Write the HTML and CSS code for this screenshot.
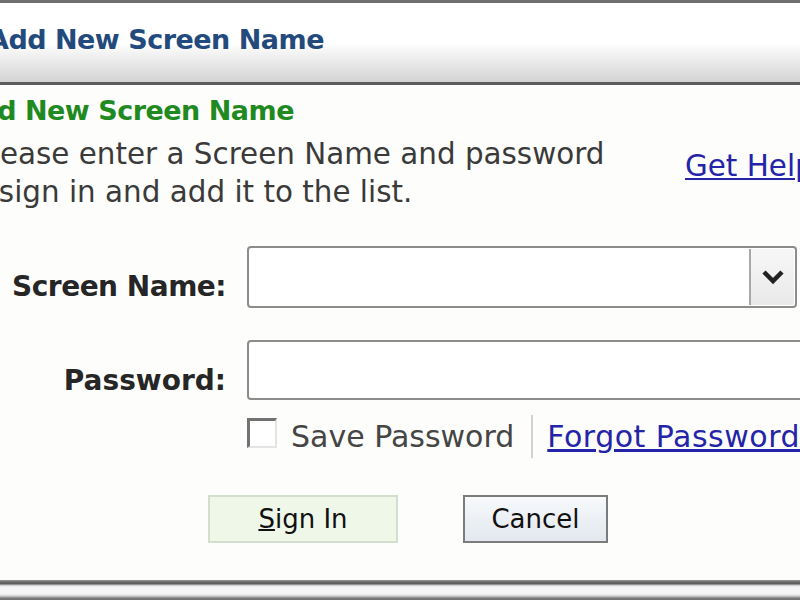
FILE: index.html
```html
<!DOCTYPE html>
<html>
<head>
<meta charset="utf-8">
<title>Add New Screen Name</title>
<link rel="stylesheet" href="styles.css">
</head>
<body>
<div class="window">
  <header class="titlebar"><h1 class="title">Add New Screen Name</h1></header>
  <main class="content">
    <h2 class="heading">Add New Screen Name</h2>
    <div class="intro">
      <p class="intro-text">Please enter a Screen Name and password<br>to sign in and add it to the list.</p>
      <a class="link help" href="#">Get Help</a>
    </div>
    <div class="row row-name">
      <label class="label">Screen Name:</label>
      <div class="combo">
        <div class="combo-input"></div>
        <div class="combo-btn">
          <svg width="24" height="16" viewBox="0 0 24 16"><path d="M3 3 L12 12 L21 3" fill="none" stroke="#222" stroke-width="4.5"/></svg>
        </div>
      </div>
    </div>
    <div class="row row-pass">
      <label class="label label-pass">Password:</label>
      <div class="field"></div>
    </div>
    <div class="options">
      <span class="checkbox"></span>
      <span class="opt-text">Save Password</span>
      <span class="sep"></span>
      <a class="link forgot" href="#">Forgot Password</a>
    </div>
    <div class="buttons">
      <button class="btn btn-signin"><u>S</u>ign In</button>
      <button class="btn btn-cancel">Cancel</button>
    </div>
  </main>
  <footer class="footer"></footer>
</div>
</body>
</html>
```
FILE: styles.css
```css
html, body {
  margin: 0;
  padding: 0;
}
body {
  width: 800px;
  height: 600px;
  overflow: hidden;
  background: #fdfdfb;
  font-family: "DejaVu Sans", sans-serif;
}
.window {
  width: 800px;
  height: 600px;
  display: flex;
  flex-direction: column;
  overflow: hidden;
}
.titlebar {
  flex: none;
  height: 79px;
  border-top: 3px solid #6f6f6f;
  border-bottom: 3px solid #5c5c5c;
  background: linear-gradient(to bottom, #ffffff 0px, #ffffff 40px, #f3f3f3 50px, #e2e2e2 66px, #d3d3d3 79px);
  display: flex;
  align-items: flex-start;
  white-space: nowrap;
}
.title {
  margin: 22px 0 0 -12px;
  font-size: 27px;
  line-height: 30px;
  font-weight: bold;
  letter-spacing: -0.5px;
  color: #234a7c;
}
.content {
  flex: none;
  height: 495px;
  overflow: hidden;
}
.heading {
  margin: 11px 0 0 -42px;
  font-size: 27px;
  line-height: 30px;
  font-weight: bold;
  letter-spacing: -0.5px;
  color: #1f8a1f;
  white-space: nowrap;
}
.intro {
  display: flex;
  margin-top: 9px;
  height: 76px;
}
.intro-text {
  flex: none;
  width: 725px;
  margin: 0 0 0 -40px;
  text-indent: 14px;
  font-size: 29.4px;
  line-height: 38px;
  color: #3a3a3a;
  white-space: nowrap;
}
.link {
  color: #2424a8;
  text-decoration: underline;
  white-space: nowrap;
}
.help {
  flex: none;
  padding-top: 12px;
  font-size: 29.4px;
  line-height: 38px;
}
.row {
  display: flex;
  column-gap: 21px;
}
.row-name {
  margin-top: 35px;
}
.row-pass {
  margin-top: 32px;
}
.label {
  flex: none;
  width: 226px;
  margin-top: 26px;
  text-align: right;
  font-size: 28px;
  line-height: 30px;
  font-weight: bold;
  letter-spacing: -0.5px;
  color: #262626;
  white-space: nowrap;
}
.label-pass {
  letter-spacing: 0;
}
.combo {
  flex: none;
  width: 550px;
  height: 62px;
  box-sizing: border-box;
  border: 2px solid #8c8c8c;
  border-radius: 4px;
  background: #ffffff;
  display: flex;
}
.combo-input {
  flex: 1;
}
.combo-btn {
  flex: none;
  width: 43px;
  margin: 1px 1px 1px 0;
  border-left: 2px solid #a9a9a9;
  border-radius: 0 2px 2px 0;
  background: linear-gradient(to bottom, #f7f7f7, #e9e9e9);
  display: flex;
  align-items: center;
  justify-content: center;
}
.field {
  flex: none;
  width: 600px;
  height: 60px;
  box-sizing: border-box;
  border: 2px solid #8c8c8c;
  border-radius: 4px;
  background: #ffffff;
}
.options {
  display: flex;
  align-items: center;
  height: 43px;
  margin: 15px 0 0 247px;
  white-space: nowrap;
}
.checkbox {
  flex: none;
  align-self: flex-start;
  margin: 3px 14px 0 0;
  width: 30px;
  height: 30px;
  box-sizing: border-box;
  border-top: 3px solid #727272;
  border-left: 3px solid #727272;
  border-right: 2px solid #e4e4e4;
  border-bottom: 2px solid #e4e4e4;
  background: #ffffff;
}
.opt-text {
  font-size: 30px;
  line-height: 43px;
  color: #454545;
}
.sep {
  flex: none;
  width: 2px;
  height: 43px;
  margin: 0 14px 0 17px;
  background: #d2d2d2;
}
.forgot {
  font-size: 30px;
  line-height: 43px;
  letter-spacing: 0.5px;
}
.buttons {
  display: flex;
  column-gap: 65px;
  margin: 37px 0 0 208px;
}
.btn {
  height: 48px;
  padding: 0;
  box-sizing: border-box;
  font-family: "DejaVu Sans", sans-serif;
  font-size: 26px;
  color: #111111;
  display: flex;
  align-items: center;
  justify-content: center;
}
.btn u {
  text-decoration-thickness: 2px;
}
.btn-signin {
  width: 190px;
  background: #eff7e8;
  border: 2px solid #d3dfcc;
}
.btn-cancel {
  width: 145px;
  background: linear-gradient(to bottom, #f7f9fb, #e2e8ee);
  border: 2px solid #7b7b7b;
}
.footer {
  flex: none;
  height: 20px;
  background: linear-gradient(to bottom, #9a9a9a 0px, #6a6a6a 2px, #5a5a5a 4px, #c8c8c8 5px, #f6f6f6 7px, #f6f6f6 14px, #cfcfcf 16px, #808080 18px, #707070 20px);
}
```
